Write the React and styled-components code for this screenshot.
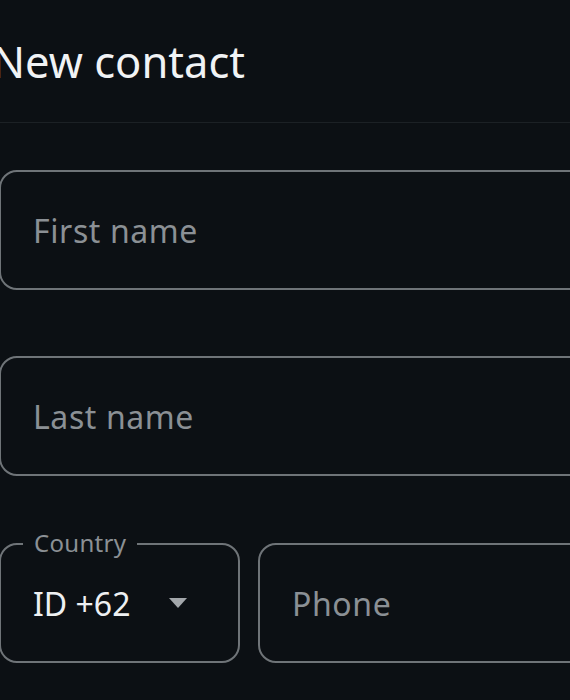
import React from "react";
import styled, { createGlobalStyle } from "styled-components";

const GlobalStyle = createGlobalStyle`
  html, body {
    margin: 0;
    padding: 0;
    background: #0c1014;
    overflow: hidden;
  }
  body {
    font-family: "Noto Sans", "Open Sans", sans-serif;
  }
`;

const Page = styled.div`
  width: 640px;
  height: 700px;
  margin-left: -7px;
  background: #0c1014;
`;

const Header = styled.header`
  padding: 31px 0 31px 0;
  border-bottom: 1px solid #1c2125;
`;

const Title = styled.h1`
  margin: 0 0 0 -1px;
  font-size: 43.5px;
  line-height: 60px;
  font-weight: 400;
  color: #f1f3f5;
`;

const Form = styled.form`
  display: flex;
  flex-direction: column;
  gap: 66px;
  padding: 47px 0 0 6px;
`;

const Field = styled.div`
  position: relative;
  box-sizing: border-box;
  height: 120px;
  width: ${(p) => p.$width || "100%"};
  flex-shrink: 0;
  border: 2px solid #6f7478;
  border-radius: 18px;
  display: flex;
  align-items: center;
  padding-left: 32px;
`;

const Placeholder = styled.span`
  font-size: 32px;
  letter-spacing: 0.6px;
  color: #8b9095;
`;

const Value = styled.span`
  font-size: 32px;
  color: #eef0f2;
`;

const Row = styled.div`
  display: flex;
  gap: 18px;
  margin-top: 1px;
`;

const Label = styled.span`
  position: absolute;
  top: -17px;
  left: 22px;
  padding: 0 11px;
  background: #0c1014;
  font-size: 24px;
  line-height: 30px;
  letter-spacing: 0.3px;
  color: #8b9095;
`;

const Caret = styled.span`
  margin-left: 39px;
  width: 0;
  height: 0;
  border-left: 9px solid transparent;
  border-right: 9px solid transparent;
  border-top: 10px solid #a3a7ab;
`;

export default function App() {
  return (
    <Page>
      <GlobalStyle />
      <Header>
        <Title>New contact</Title>
      </Header>
      <Form>
        <Field>
          <Placeholder>First name</Placeholder>
        </Field>
        <Field>
          <Placeholder>Last name</Placeholder>
        </Field>
        <Row>
          <Field $width="241px">
            <Label>Country</Label>
            <Value>ID +62</Value>
            <Caret />
          </Field>
          <Field>
            <Placeholder>Phone</Placeholder>
          </Field>
        </Row>
      </Form>
    </Page>
  );
}
